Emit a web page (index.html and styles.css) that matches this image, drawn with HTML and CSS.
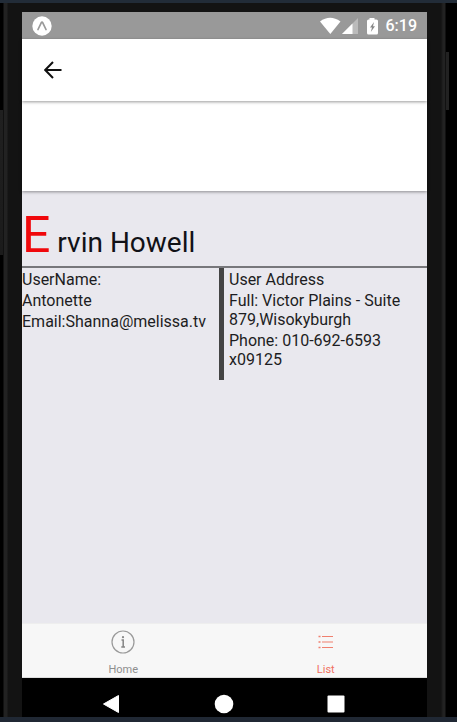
FILE: index.html
```html
<!DOCTYPE html>
<html lang="en">
<head>
<meta charset="utf-8">
<meta name="viewport" content="width=device-width, initial-scale=1">
<title>Ervin Howell</title>
<link rel="stylesheet" href="styles.css">
</head>
<body>
<div class="phone">
  <div class="side side-left"></div>
  <div class="screen">
    <div class="status">
      <svg class="expo" viewBox="0 0 20 20" width="20" height="20"><circle cx="10" cy="10" r="9.700" fill="#fff"/><path d="M6 13.500 9.200 6.800q.8-1.200 1.600 0L14 13.500" fill="none" stroke="#999" stroke-width="1.700" stroke-linecap="round"/></svg>
      <svg class="signals" viewBox="0 0 60 18" width="60" height="18">
        <path d="M0 4.500Q10-3 20.500 4.500L10.300 17Z" fill="#fff"/>
        <path d="M38 1V17H22Z" fill="#bbb"/><path d="M32.500 6.500V17H22Z" fill="#fff"/>
        <path d="M49.500 1h5v1.500h2q1.500 0 1.500 1.500v12q0 1.500-1.500 1.500h-8q-1.500 0-1.500-1.500v-12q0-1.500 1.500-1.500h1Z" fill="#fff"/>
        <path d="M54 5 50 10.500h2L50.800 15 55 9.300h-2Z" fill="#888"/>
      </svg>
      <span class="clock">6:19</span>
    </div>
    <header class="bar">
      <button class="back" type="button" aria-label="Back">
        <svg viewBox="0 0 18 18" width="18" height="18"><path d="M17.500 9H1.500M9 1 1.200 9 9 17" fill="none" stroke="#111" stroke-width="2"/></svg>
      </button>
    </header>
    <div class="bar bar-tall"></div>
    <main class="content">
      <h1 class="name"><span class="initial">E</span> rvin Howell</h1>
      <div class="details">
        <section class="account">
          <p>UserName:</p>
          <p>Antonette</p>
          <p>Email:Shanna@melissa.tv</p>
        </section>
        <section class="address">
          <p>User Address</p>
          <p>Full: Victor Plains - Suite 879,Wisokyburgh</p>
          <p>Phone: 010-692-6593 x09125</p>
        </section>
      </div>
    </main>
    <nav class="tabs">
      <a class="tab" href="#home">
        <svg viewBox="0 0 24 24" width="24" height="24"><circle cx="12" cy="12" r="11" fill="none" stroke="#999" stroke-width="1.200"/><circle cx="12" cy="7.200" r="1.100" fill="#858585"/><path d="M10.500 10h1.700v7M10.300 17h3.700" fill="none" stroke="#858585" stroke-width="1.500"/></svg>
        <span>Home</span>
      </a>
      <a class="tab active" href="#list">
        <svg viewBox="0 0 24 24" width="24" height="24"><g stroke="#f0806f" stroke-width="1.200"><path d="M8 6.500H19M8 12H19M8 17.500H19"/><path stroke-width="1.700" d="M4.500 6.500h2M4.500 12h2M4.500 17.500h2"/></g></svg>
        <span>List</span>
      </a>
    </nav>
    <div class="system">
      <button type="button" aria-label="Back"><svg viewBox="0 0 20 20" width="20" height="20"><path d="M16.500 1.500V18.500L1.500 10Z" fill="#fff" stroke="#fff" stroke-linejoin="round"/></svg></button>
      <button type="button" aria-label="Home"><svg viewBox="0 0 20 20" width="20" height="20"><circle cx="10" cy="10" r="9.300" fill="#fff"/></svg></button>
      <button type="button" aria-label="Recents"><svg viewBox="0 0 20 20" width="20" height="20"><rect x="1.500" y="1.500" width="17" height="17" rx="1" fill="#fff"/></svg></button>
    </div>
  </div>
  <div class="side side-right"></div>
</div>
</body>
</html>
```
FILE: styles.css
```css
* { box-sizing: border-box; }
body {
  margin: 0;
  font-family: Roboto, "Liberation Sans", sans-serif;
  color: #1d1d22;
}
button { border: 0; padding: 0; background: none; }
svg { display: block; }
p, h1 { margin: 0; font-weight: 400; }

.phone {
  display: flex;
  min-height: 100vh;
  background: #131313;
  border-top: 3px solid #222c38;
  border-bottom: 5px solid #202834;
}
.side { flex: none; }
.side-left {
  width: 22px;
  background:
    linear-gradient(#202020, #1b1b1b) 0 107px / 3px 145px no-repeat,
    linear-gradient(90deg, #000 3px, #222 4px, #222 7px, #131313 8px);
}
.side-right {
  width: 30px;
  background:
    linear-gradient(#222, #222) 19px 49px / 3px 58px no-repeat,
    linear-gradient(90deg, #131313 14px, #222 16px, #222 18px, #000 19px);
}
.screen {
  flex: 1;
  display: flex;
  flex-direction: column;
  padding-top: 9px;
  min-width: 0;
}

.status {
  display: flex;
  align-items: center;
  height: 27px;
  padding: 0 10px;
  background: #999;
}
.signals { margin-left: auto; }
.clock {
  margin-left: 6px;
  font-size: 16px;
  line-height: 20px;
  font-weight: 500;
  color: #fff;
}

.bar {
  position: relative;
  display: flex;
  align-items: center;
  height: 62px;
  padding-left: 22px;
  background: #fff;
  box-shadow: 0 1px 3px #0006;
  z-index: 2;
}
.bar-tall { height: 90px; z-index: 1; }

.content { flex: 1; background: #e9e8ee; }
.name {
  height: 77px;
  padding-top: 19px;
  border-bottom: 2px solid #77777b;
  font-size: 28px;
  line-height: 50px;
  color: #111116;
}
.initial { font-size: 50px; line-height: 50px; color: #f0080c; }
.details {
  display: flex;
  font-size: 16px;
  line-height: 19px;
}
.details section {
  display: flex;
  flex-direction: column;
  gap: 2px;
  min-height: 112px;
  padding-top: 2px;
}
.account { width: 197px; }
.address { flex: 1; border-left: 5px solid #444; padding-left: 5px; padding-right: 5px; }

.tabs {
  display: flex;
  height: 55px;
  border-top: 1px solid #eee;
  border-bottom: 1px solid #ddd;
  background: #f7f7f7;
}
.tab {
  flex: 1;
  display: flex;
  flex-direction: column;
  align-items: center;
  gap: 9px;
  padding-top: 6px;
  font-size: 11px;
  line-height: 13px;
  color: #8e8e8e;
  text-decoration: none;
}
.tab.active { color: #f0705f; }

.system {
  display: flex;
  justify-content: center;
  gap: 92px;
  height: 39px;
  padding: 16px 2px 0 0;
  background: #000;
}
.system button { height: 20px; }
```
